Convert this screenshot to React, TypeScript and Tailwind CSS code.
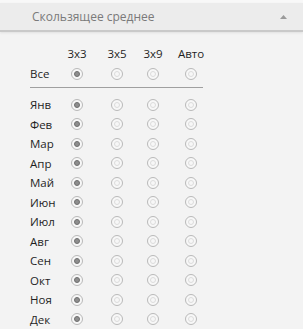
import React from "react";

const months = ["Янв","Фев","Мар","Апр","Май","Июн","Июл","Авг","Сен","Окт","Ноя","Дек"];

function Radio({ checked }: { checked?: boolean }) {
  return (
    <span className="flex h-[12px] w-[12px] items-center justify-center rounded-full border border-[#b9b9b9] bg-[#f7f7f7]">
      {checked ? (
        <span className="h-[6px] w-[6px] rounded-full border border-[#6f6f6f] bg-[#8e8e8e]" />
      ) : (
        <span className="h-[6px] w-[6px] rounded-full border border-[#dcdcdc]" />
      )}
    </span>
  );
}

function Row({ label, h }: { label: string; h: string }) {
  return (
    <div className={`grid grid-cols-[28px_38px_42px_30px_46px] items-center ${h}`}>
      <span>{label}</span>
      <span className="flex justify-center"><Radio checked /></span>
      <span className="flex justify-center"><Radio /></span>
      <span className="flex justify-center"><Radio /></span>
      <span className="flex justify-center"><Radio /></span>
    </div>
  );
}

export default function App() {
  return (
    <div className="h-[329px] w-[303px] bg-[#f8f8f8] pt-[3px]" style={{ fontFamily: '"Open Sans", "DejaVu Sans", sans-serif' }}>
      <div className="flex h-[327px] flex-col border-b border-[#a9a9a9] bg-[#f3f3f3]">
        <div className="flex h-[30px] items-center justify-between border-b-2 border-[#c9c9c9] bg-[#ececec] pl-[32px] pr-[16px] shadow-[0_1px_2px_#e0e0e0]">
          <span className="text-[12px] text-[#7a7a7a]">Скользящее среднее</span>
          <svg width="7" height="4" viewBox="0 0 7 4"><path d="M0 4 L3.5 0 L7 4 Z" fill="#9a9a9a" /></svg>
        </div>
        <div className="pl-[30px] pt-[12px] text-[11.5px] text-[#1f1f1f]">
          <div className="grid h-[20px] grid-cols-[28px_38px_42px_30px_46px] items-center">
            <span />
            <span className="text-center">3x3</span>
            <span className="text-center">3x5</span>
            <span className="text-center">3x9</span>
            <span className="text-center">Авто</span>
          </div>
          <Row label="Все" h="h-[20px]" />
          <div className="mt-[3px] mb-[7px] h-px w-[173px] bg-[#9f9f9f]" />
          {months.map((m) => (
            <Row key={m} label={m} h="h-[19.5px]" />
          ))}
        </div>
      </div>
    </div>
  );
}
